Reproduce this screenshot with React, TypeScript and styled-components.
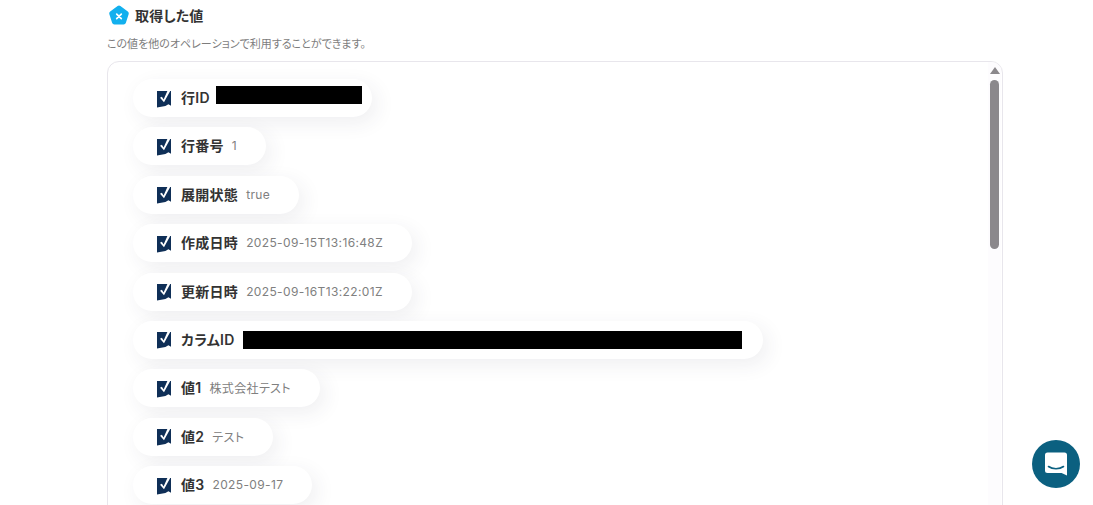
import { createGlobalStyle } from "styled-components";
import styled from "styled-components";

const GlobalStyle = createGlobalStyle`
  html, body {
    margin: 0;
    height: 100%;
    background: #fff;
    overflow: hidden;
  }
  body {
    font-family: Inter, "Noto Sans CJK JP", sans-serif;
    font-feature-settings: "palt";
  }
`;

type Item = {
  label: string;
  value?: string;
  redact?: { width: number; gap: number; lift: number; end: number };
};

const items: Item[] = [
  { label: "行ID", redact: { width: 146, gap: 6, lift: 6, end: 10 } },
  { label: "行番号", value: "1" },
  { label: "展開状態", value: "true" },
  { label: "作成日時", value: "2025-09-15T13:16:48Z" },
  { label: "更新日時", value: "2025-09-16T13:22:01Z" },
  { label: "カラムID", redact: { width: 499, gap: 8, lift: 0, end: 21 } },
  { label: "値1", value: "株式会社テスト" },
  { label: "値2", value: "テスト" },
  { label: "値3", value: "2025-09-17" },
];

const CheckIcon = () => (
  <svg width="15" height="18" viewBox="0 0 15 18">
    <path d="M0 1h14v14.800l-2.600-1.500-3 1.700L0 17.500z" fill="#0f2f57" />
    <path d="M3 7.800l1.900-1 1.700 2.700L10.400 1H13.200L7 12.300z" fill="#fff" />
  </svg>
);

const PentagonIcon = () => (
  <svg width="22" height="21" viewBox="0 0 22 21">
    <path
      d="M9.600 1.100a2.400 2.400 0 0 1 2.800 0l7.400 5.300a2.400 2.400 0 0 1 .9 2.700l-2.800 8.700a2.400 2.400 0 0 1-2.300 1.700H6.400a2.400 2.400 0 0 1-2.300-1.700L1.300 9.100a2.400 2.400 0 0 1 .9-2.700z"
      fill="#12b0ee"
    />
    <path d="M8.700 9.100l4.600 4.600M13.300 9.100l-4.600 4.600" stroke="#fff" strokeWidth="1.700" strokeLinecap="round" />
  </svg>
);

const ChatIcon = () => (
  <svg width="24" height="26" viewBox="0 0 24 26">
    <path
      d="M3.500 1.500h17a2.500 2.500 0 0 1 2.500 2.500v20.500l-5.400-2.500H3.500A2.500 2.500 0 0 1 1 19.500V4a2.500 2.500 0 0 1 2.500-2.500z"
      fill="#fff"
    />
    <path d="M4.500 15.500c4 3 11 3 15 0" fill="none" stroke="#0b6080" strokeWidth="1.600" strokeLinecap="round" />
  </svg>
);

export default function App() {
  return (
    <>
      <GlobalStyle />
      <Page>
        <Heading>
          <PentagonIcon />
          <HeadingText>取得した値</HeadingText>
        </Heading>
        <Description>この値を他のオペレーションで利用することができます。</Description>
        <Panel>
          <List>
            {items.map((item) => (
              <Pill key={item.label} $end={item.redact ? item.redact.end : 29}>
                <CheckBox>
                  <CheckIcon />
                </CheckBox>
                <Label>{item.label}</Label>
                {item.redact ? (
                  <Redacted $width={item.redact.width} $gap={item.redact.gap} $lift={item.redact.lift} />
                ) : (
                  <Value>{item.value}</Value>
                )}
              </Pill>
            ))}
          </List>
          <Rail>
            <RailArrow />
            <RailThumb />
          </Rail>
        </Panel>
        <ChatButton>
          <ChatIcon />
        </ChatButton>
      </Page>
    </>
  );
}

const Page = styled.div`
  height: 505px;
  overflow: hidden;
  padding: 5px 90px 0 107px;
  box-sizing: border-box;
  position: relative;
`;

const Heading = styled.div`
  display: flex;
  align-items: center;
  gap: 5px;
  height: 21px;
  padding-left: 1px;
`;

const HeadingText = styled.span`
  margin-top: -2px;
  font-size: 14px;
  font-weight: 700;
  color: #333;
  letter-spacing: 0.01em;
`;

const Description = styled.p`
  margin: 11px 0 0;
  font-size: 11px;
  line-height: 15px;
  color: #7d7d7d;
`;

const Panel = styled.div`
  margin-top: 9px;
  height: 480px;
  border: 1px solid #e8e6ec;
  border-radius: 12px;
  display: flex;
  box-sizing: border-box;
  overflow: hidden;
`;

const List = styled.div`
  flex: 1;
  display: flex;
  flex-direction: column;
  align-items: flex-start;
  gap: 10.4px;
  padding: 17px 0 0 25px;
`;

const Pill = styled.div<{ $end: number }>`
  height: 38px;
  flex: none;
  display: flex;
  align-items: center;
  padding: 0 ${(p) => p.$end}px 0 24px;
  border-radius: 19px;
  background: #fff;
  box-shadow: 5px 6px 20px rgba(50, 45, 80, 0.08);
`;

const CheckBox = styled.span`
  display: flex;
  margin-top: 1px;
`;

const Label = styled.span`
  margin-left: 9px;
  margin-top: -2px;
  font-size: 14px;
  font-weight: 600;
  color: #333;
  letter-spacing: 0.02em;
`;

const Value = styled.span`
  margin-left: 8px;
  margin-top: -1px;
  font-size: 12px;
  color: #808080;
  letter-spacing: 0.03em;
`;

const Redacted = styled.span<{ $width: number; $gap: number; $lift: number }>`
  margin-left: ${(p) => p.$gap}px;
  margin-bottom: ${(p) => p.$lift}px;
  width: ${(p) => p.$width}px;
  height: 18px;
  background: #000;
`;

const Rail = styled.div`
  width: 13px;
  flex: none;
  margin-right: 1px;
  display: flex;
  flex-direction: column;
  align-items: center;
  padding-top: 5px;
  background: #fdfcfe;
`;

const RailArrow = styled.div`
  width: 0;
  height: 0;
  border-left: 5px solid transparent;
  border-right: 5px solid transparent;
  border-bottom: 7px solid #8b888c;
`;

const RailThumb = styled.div`
  width: 9px;
  height: 169px;
  margin-top: 6px;
  border-radius: 5px;
  background: #8b888c;
`;

const ChatButton = styled.div`
  position: absolute;
  right: 13px;
  bottom: 17px;
  width: 48px;
  height: 48px;
  border-radius: 50%;
  background: #0b6080;
  display: flex;
  align-items: center;
  justify-content: center;
`;
